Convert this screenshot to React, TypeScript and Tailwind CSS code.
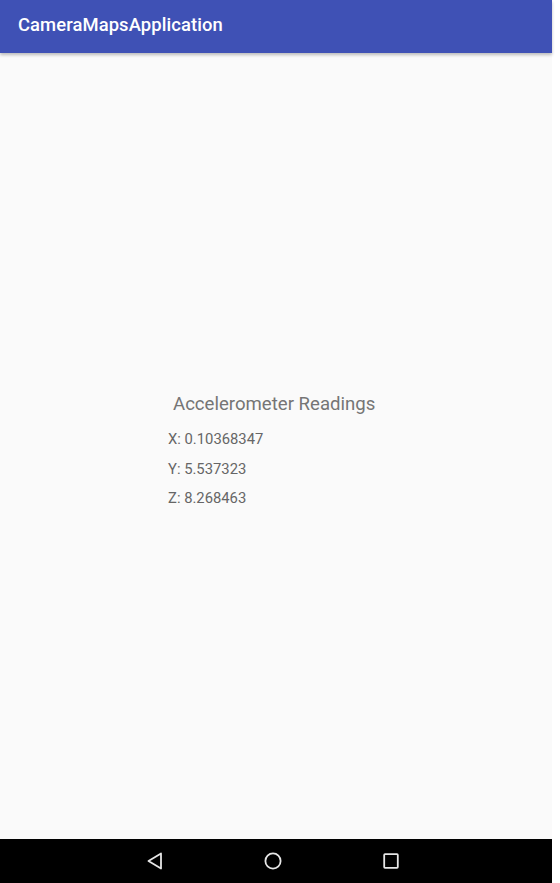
import React from "react";

const readings = [
  { axis: "X", value: "0.10368347" },
  { axis: "Y", value: "5.537323" },
  { axis: "Z", value: "8.268463" },
];

export default function App() {
  return (
    <div
      className="flex h-[883px] w-[552px] flex-col bg-[#fafafa]"
      style={{ fontFamily: "Roboto, 'Noto Sans', sans-serif" }}
    >
      {/* app bar */}
      <header className="relative z-10 flex h-[53px] shrink-0 items-center bg-[#3f51b5] pl-[18px] shadow-[0_2px_3px_rgba(0,0,0,0.25)]">
        <h1 className="pb-[4px] text-[18.4px] font-medium tracking-[0.1px] text-white">
          CameraMapsApplication
        </h1>
      </header>

      {/* content */}
      <main className="flex flex-1 items-center justify-center pt-[14px]">
        <div className="flex w-[208px] translate-x-[-4px] flex-col">
          <div className="pl-[5px] text-[18.6px] leading-[24px] text-[#757575]">
            Accelerometer Readings
          </div>
          <div className="mt-[9px] flex flex-col">
            {readings.map((r) => (
              <div
                key={r.axis}
                className="text-[14.8px] leading-[29.5px] text-[#666666]"
              >
                {r.axis}: {r.value}
              </div>
            ))}
          </div>
        </div>
      </main>

      {/* navigation bar */}
      <nav className="flex h-[44px] shrink-0 items-center bg-black">
        <div className="flex w-full items-center justify-center gap-[100px] pr-[6px]">
          <svg width="18" height="18" viewBox="0 0 18 18" fill="none">
            <path
              d="M15 1.5 L2.5 9 L15 16.5 Z"
              stroke="#e6e6e6"
              strokeWidth="1.8"
              strokeLinejoin="round"
            />
          </svg>
          <svg width="18" height="18" viewBox="0 0 18 18" fill="none">
            <circle cx="9" cy="9" r="7.6" stroke="#e6e6e6" strokeWidth="1.8" />
          </svg>
          <svg width="18" height="18" viewBox="0 0 18 18" fill="none">
            <rect
              x="2.2"
              y="2.2"
              width="13.6"
              height="13.6"
              rx="0.8"
              stroke="#e6e6e6"
              strokeWidth="1.8"
            />
          </svg>
        </div>
      </nav>
    </div>
  );
}
